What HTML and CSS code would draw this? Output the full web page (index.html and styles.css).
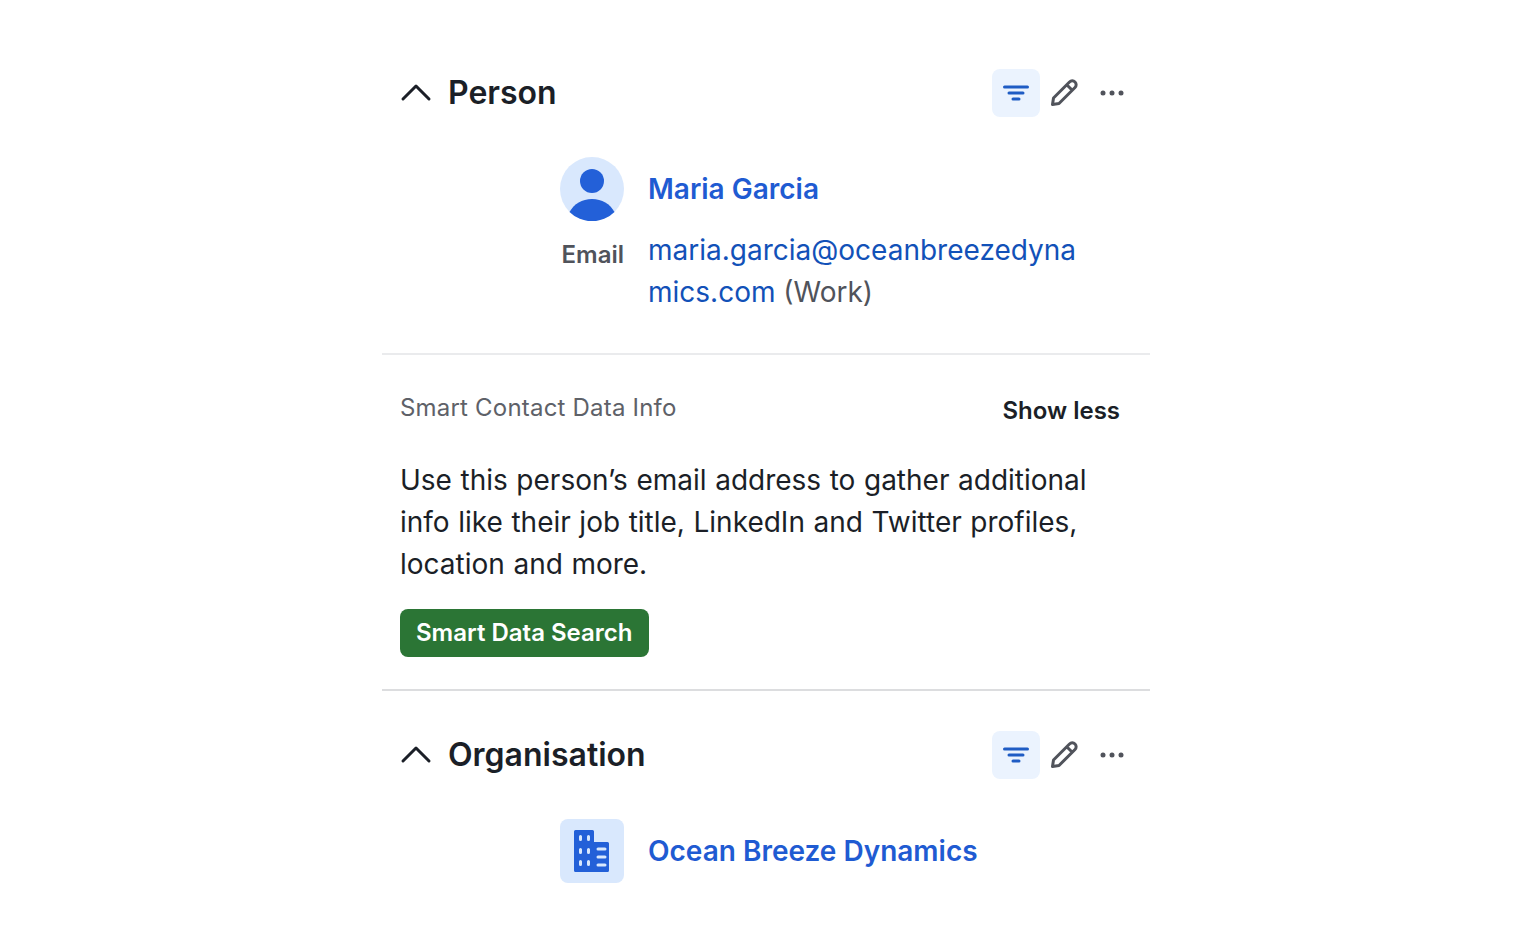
FILE: index.html
```html
<!DOCTYPE html>
<html lang="en">
<head>
    <meta charset="UTF-8">
    <meta name="viewport" content="width=device-width, initial-scale=1.0">
    <title>Person details</title>
    <link rel="stylesheet" href="styles.css">
</head>
<body>
    <div id="panel">
        <section class="details">
            <div class="section-head">
                <svg class="chevron" width="32" height="32" viewBox="0 0 32 32"><path d="M3 22 L16 9 L29 22"/></svg>
                <h2>Person</h2>
                <div class="tools">
                    <button class="tool active"><svg width="28" height="28" viewBox="0 0 28 28"><path d="M2.500 8h23M7 14h14M11 20h6"/></svg></button>
                    <button class="tool"><svg width="30" height="30" viewBox="0 0 30 30"><path d="M3.500 26.500 L4.500 20 L20.500 4 A3.500 3.500 0 0 1 26 9.500 L10 25.500 Z M18 7 L23 12"/></svg></button>
                    <button class="tool"><svg width="28" height="28" viewBox="0 0 28 28"><circle cx="5" cy="14" r="2.500"/><circle cx="14" cy="14" r="2.500"/><circle cx="23" cy="14" r="2.500"/></svg></button>
                </div>
            </div>
            <div class="field name-field">
                <div class="field-label">
                    <svg class="avatar" width="64" height="64" viewBox="0 0 64 64"><circle cx="32" cy="32" r="32" fill="#d9e8fd"/><circle cx="32" cy="24" r="12" fill="#2360d8"/><path d="M9.500 55 C14 47 22 42 32 42 C42 42 50 47 54.500 55 A32 32 0 0 1 9.500 55 Z" fill="#2360d8"/></svg>
                </div>
                <a class="name-link">Maria Garcia</a>
            </div>
            <div class="field email-field">
                <div class="field-label"><span>Email</span></div>
                <div class="field-value"><a class="mail-link">maria.garcia@oceanbreezedynamics.com</a> (Work)</div>
            </div>
        </section>

        <section class="smart">
            <div class="smart-head">
                <span class="smart-title">Smart Contact Data Info</span>
                <span class="show-less">Show less</span>
            </div>
            <p>Use this person’s email address to gather additional info like their job title, LinkedIn and Twitter profiles, location and more.</p>
            <button class="search-btn">Smart Data Search</button>
        </section>

        <section class="details org">
            <div class="section-head">
                <svg class="chevron" width="32" height="32" viewBox="0 0 32 32"><path d="M3 22 L16 9 L29 22"/></svg>
                <h2>Organisation</h2>
                <div class="tools">
                    <button class="tool active"><svg width="28" height="28" viewBox="0 0 28 28"><path d="M2.500 8h23M7 14h14M11 20h6"/></svg></button>
                    <button class="tool"><svg width="30" height="30" viewBox="0 0 30 30"><path d="M3.500 26.500 L4.500 20 L20.500 4 A3.500 3.500 0 0 1 26 9.500 L10 25.500 Z M18 7 L23 12"/></svg></button>
                    <button class="tool"><svg width="28" height="28" viewBox="0 0 28 28"><circle cx="5" cy="14" r="2.500"/><circle cx="14" cy="14" r="2.500"/><circle cx="23" cy="14" r="2.500"/></svg></button>
                </div>
            </div>
            <div class="field name-field">
                <div class="field-label">
                    <svg class="avatar" width="64" height="64" viewBox="0 0 64 64">
                        <rect width="64" height="64" rx="8" fill="#d9e8fd"/>
                        <path d="M14 12.500 a1.500 1.500 0 0 1 1.500 -1.500 H32.500 a1.500 1.500 0 0 1 1.500 1.500 V23 H47.500 a1.500 1.500 0 0 1 1.500 1.500 V51.500 a1.500 1.500 0 0 1 -1.500 1.500 H15.500 a1.500 1.500 0 0 1 -1.500 -1.500 Z" fill="#2360d8"/>
                        <path d="M20.500 17.500v3M28.500 17.500v3M20.500 30.500v3M28.500 30.500v3M20.500 42.500v3M28.500 42.500v3M38 30h7M38 38h7M38 46h7" stroke="#d9e8fd" stroke-width="3" stroke-linecap="round" fill="none"/>
                    </svg>
                </div>
                <a class="name-link">Ocean Breeze Dynamics</a>
            </div>
        </section>
    </div>
</body>
</html>
```

FILE: styles.css
```css
body {
    font-family: Inter, "Liberation Sans", sans-serif;
    margin: 0;
    padding: 0;
    background-color: #fff;
    color: #1b1f27;
}
#panel {
    width: 768px;
    margin-left: 382px;
    padding-top: 69px;
}
.section-head {
    display: flex;
    align-items: center;
    height: 48px;
    padding-left: 18px;
    padding-right: 14px;
}
.chevron {
    width: 32px;
    height: 32px;
    margin-right: 16px;
}
.chevron path {
    fill: none;
    stroke: #1b1f27;
    stroke-width: 3;
    stroke-linecap: round;
    stroke-linejoin: round;
}
h2 {
    margin: 0;
    padding-bottom: 2px;
    font-size: 32px;
    font-weight: 600;
    flex: 1;
}
.tools {
    display: flex;
}
.tool {
    width: 48px;
    height: 48px;
    padding: 0;
    border: none;
    border-radius: 8px;
    background: none;
    display: flex;
    align-items: center;
    justify-content: center;
}
.tool svg {
    fill: #50535b;
}
.tool path {
    fill: none;
    stroke: #50535b;
    stroke-width: 3;
    stroke-linecap: round;
    stroke-linejoin: round;
}
.tool.active {
    background-color: #ebf3fe;
}
.tool.active path {
    stroke: #1f5cc4;
}
.field {
    display: flex;
    column-gap: 24px;
}
.field-label {
    width: 242px;
    flex: none;
    display: flex;
    justify-content: flex-end;
}
.name-field {
    margin-top: 40px;
    align-items: center;
}
.name-link {
    font-size: 28px;
    font-weight: 600;
    color: #1f5bd2;
}
.email-field {
    margin-top: 8px;
    padding-bottom: 40px;
}
.email-field .field-label {
    font-size: 24px;
    font-weight: 600;
    line-height: 36px;
    padding-top: 8px;
    color: #50535b;
}
.field-value {
    width: 430px;
    font-size: 28px;
    line-height: 42px;
    overflow-wrap: anywhere;
    color: #50535b;
}
.mail-link {
    color: #1251b8;
}
.smart {
    border-top: 2px solid #eaebed;
    border-bottom: 2px solid #dcdddf;
    padding: 34px 18px 32px;
}
.smart-head {
    display: flex;
    justify-content: space-between;
    padding-right: 12px;
}
.smart-title {
    font-size: 24px;
    letter-spacing: 0.2px;
    line-height: 38px;
    color: #5e6168;
}
.show-less {
    font-size: 24px;
    font-weight: 600;
    line-height: 36px;
    margin-top: 4px;
}
.smart p {
    margin: 30px 0 0;
    font-size: 28px;
    line-height: 42px;
    word-spacing: 0.7px;
}
.search-btn {
    display: block;
    margin-top: 24px;
    height: 48px;
    padding: 0 16px 2px;
    border: none;
    border-radius: 8px;
    background-color: #2b7535;
    color: #fff;
    font-family: inherit;
    font-size: 24px;
    font-weight: 600;
}
.org {
    padding-top: 40px;
}
```
